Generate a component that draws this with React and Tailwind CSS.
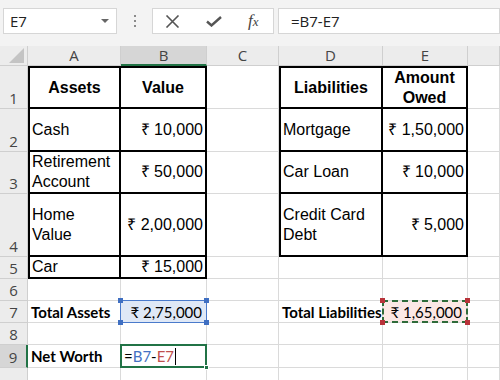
import React from "react";

const HDR = "bg-[#ececec] border-r border-b border-[#cfcfcf] flex items-center justify-center text-[15px] text-[#444] font-['Open_Sans',sans-serif]";
const ROWH = "bg-[#ececec] border-r border-b border-[#cfcfcf] flex items-end justify-center text-[15px] leading-[20px] text-[#444] font-['Open_Sans',sans-serif]";
const BASE = "border-r border-b border-[#dadada] flex items-center leading-[20px] whitespace-nowrap";
const CELL = `${BASE} px-[2px] text-[16px] font-['Liberation_Sans',Arial,sans-serif]`;
const TA = "border-l-2 border-r-2 border-b-2 border-l-black border-r-black border-b-black";
const TB = "border-r-2 border-b-2 border-r-black border-b-black";
const TOP = "border-t-2 border-t-black";
const LBL = `${BASE} pl-[3px] font-bold text-[15px] font-['Lato',sans-serif]`;
const VAL = `${BASE} relative text-[15px] font-['Lato',sans-serif]`;

function Toolbar() {
  return (
    <div className="h-[46px] bg-[#f3f3f3] flex items-start pt-[8px]">
      <div className="ml-[3px] w-[114px] h-[26px] bg-white border border-[#d6d6d6] flex items-center justify-between pl-[6px] pr-[7px]">
        <span className="text-[15px] text-[#222] font-['Open_Sans',sans-serif]">E7</span>
        <svg width="8" height="5" viewBox="0 0 8 5"><path d="M0 0 L8 0 L4 4 Z" fill="#666" /></svg>
      </div>
      <div className="w-[35px] h-[26px] flex flex-col items-center justify-center gap-[3px]">
        <div className="w-[2px] h-[2px] bg-[#8a8a8a]" />
        <div className="w-[2px] h-[2px] bg-[#8a8a8a]" />
        <div className="w-[2px] h-[2px] bg-[#8a8a8a]" />
      </div>
      <div className="w-[122px] h-[26px] bg-white border border-[#d6d6d6] flex items-center">
        <svg className="ml-[12px]" width="15" height="13" viewBox="0 0 15 13">
          <path d="M1.5 0.5 L13.5 12.5 M13.5 0.5 L1.5 12.5" stroke="#555" strokeWidth="1.6" fill="none" />
        </svg>
        <svg className="ml-[26px]" width="16" height="11" viewBox="0 0 16 11">
          <path d="M1 5.5 L5.5 9.5 L15 1" stroke="#555" strokeWidth="2.4" fill="none" />
        </svg>
        <span className="ml-[26px] italic text-[17px] leading-[20px] text-[#444] font-['Liberation_Serif',serif]">f<span className="text-[13px]">x</span></span>
      </div>
      <div className="ml-[4px] flex-1 h-[26px] bg-white border border-[#d6d6d6] flex items-center pl-[12px]">
        <span className="text-[15px] text-[#222] font-['Open_Sans',sans-serif]">=B7-E7</span>
      </div>
    </div>
  );
}

function Corner() {
  return (
    <div className="bg-[#ececec] border-r border-b border-[#cfcfcf] flex items-end justify-end pr-[3px] pb-[2px]">
      <svg width="15" height="15" viewBox="0 0 15 15"><path d="M15 0 L15 15 L0 15 Z" fill="#c4c4c4" /></svg>
    </div>
  );
}

function Handle({ pos, color }) {
  return <div className={`absolute w-[5px] h-[5px] ${pos} ${color}`} />;
}

export default function App() {
  return (
    <div className="w-[500px] h-[380px] overflow-hidden bg-white text-black">
      <Toolbar />
      <div className="grid grid-cols-[28px_93px_86px_72px_104px_85px_1fr] grid-rows-[20px_43px_43px_42px_63px_22px_22px_22px_22px_23px_40px]">
        {/* header row */}
        <Corner />
        <div className={HDR}>A</div>
        <div className="bg-[#d6d6d6] border-r border-[#cfcfcf] border-b-2 border-b-[#217346] flex items-center justify-center text-[15px] text-[#444] font-['Open_Sans',sans-serif]">B</div>
        <div className={HDR}>C</div>
        <div className={HDR}>D</div>
        <div className={HDR}>E</div>
        <div className={HDR}></div>

        {/* row 1 */}
        <div className={ROWH}>1</div>
        <div className={`${CELL} ${TA} ${TOP} justify-center font-bold`}>Assets</div>
        <div className={`${CELL} ${TB} ${TOP} justify-center font-bold`}>Value</div>
        <div className={CELL}></div>
        <div className={`${CELL} ${TA} ${TOP} justify-center font-bold`}>Liabilities</div>
        <div className={`${CELL} ${TB} ${TOP} flex-col justify-center font-bold text-center`}>
          <span>Amount</span>
          <span>Owed</span>
        </div>
        <div className={CELL}></div>

        {/* row 2 */}
        <div className={ROWH}>2</div>
        <div className={`${CELL} ${TA}`}>Cash</div>
        <div className={`${CELL} ${TB} justify-end`}>₹ 10,000</div>
        <div className={CELL}></div>
        <div className={`${CELL} ${TA}`}>Mortgage</div>
        <div className={`${CELL} ${TB} justify-end`}>₹ 1,50,000</div>
        <div className={CELL}></div>

        {/* row 3 */}
        <div className={ROWH}>3</div>
        <div className={`${CELL} ${TA} flex-col items-start justify-center`}>
          <span>Retirement</span>
          <span>Account</span>
        </div>
        <div className={`${CELL} ${TB} justify-end`}>₹ 50,000</div>
        <div className={CELL}></div>
        <div className={`${CELL} ${TA}`}>Car Loan</div>
        <div className={`${CELL} ${TB} justify-end`}>₹ 10,000</div>
        <div className={CELL}></div>

        {/* row 4 */}
        <div className={ROWH}>4</div>
        <div className={`${CELL} ${TA} flex-col items-start justify-center`}>
          <span>Home</span>
          <span>Value</span>
        </div>
        <div className={`${CELL} ${TB} justify-end`}>₹ 2,00,000</div>
        <div className={CELL}></div>
        <div className={`${CELL} ${TA} flex-col items-start justify-center`}>
          <span>Credit Card</span>
          <span>Debt</span>
        </div>
        <div className={`${CELL} ${TB} justify-end`}>₹ 5,000</div>
        <div className={CELL}></div>

        {/* row 5 */}
        <div className={ROWH}>5</div>
        <div className={`${CELL} ${TA}`}>Car</div>
        <div className={`${CELL} ${TB} justify-end`}>₹ 15,000</div>
        <div className={CELL}></div>
        <div className={CELL}></div>
        <div className={CELL}></div>
        <div className={CELL}></div>

        {/* row 6 */}
        <div className={ROWH}>6</div>
        <div className={CELL}></div>
        <div className={CELL}></div>
        <div className={CELL}></div>
        <div className={CELL}></div>
        <div className={CELL}></div>
        <div className={CELL}></div>

        {/* row 7 */}
        <div className={ROWH}>7</div>
        <div className={LBL}>Total Assets</div>
        <div className={`${VAL} justify-end bg-[#dfe8f6] pr-[4px]`}>
          <span>₹ 2,75,000</span>
          <div className="absolute -left-px -top-px -right-px -bottom-px border border-[#4a7acb]" />
          <Handle pos="-left-[3px] -top-[3px]" color="bg-[#3f6fc2]" />
          <Handle pos="-right-[3px] -top-[3px]" color="bg-[#3f6fc2]" />
          <Handle pos="-left-[3px] -bottom-[3px]" color="bg-[#3f6fc2]" />
          <Handle pos="-right-[3px] -bottom-[3px]" color="bg-[#3f6fc2]" />
        </div>
        <div className={CELL}></div>
        <div className={LBL}>Total Liabilities</div>
        <div className={`${VAL} justify-end bg-[#fbe8e5] pr-[5px]`}>
          <span>₹ 1,65,000</span>
          <div className="absolute -left-px -top-px -right-px -bottom-px border-2 border-dashed border-[#2f6b3a]" />
          <Handle pos="-left-[3px] -top-[3px]" color="bg-[#b8333a]" />
          <Handle pos="-right-[3px] -top-[3px]" color="bg-[#b8333a]" />
          <Handle pos="-left-[3px] -bottom-[3px]" color="bg-[#b8333a]" />
          <Handle pos="-right-[3px] -bottom-[3px]" color="bg-[#b8333a]" />
        </div>
        <div className={CELL}></div>

        {/* row 8 */}
        <div className={ROWH}>8</div>
        <div className={CELL}></div>
        <div className={CELL}></div>
        <div className={CELL}></div>
        <div className={CELL}></div>
        <div className={CELL}></div>
        <div className={CELL}></div>

        {/* row 9 */}
        <div className="bg-[#d6d6d6] border-b border-b-[#cfcfcf] border-r-2 border-r-[#217346] flex items-end justify-center text-[15px] leading-[20px] text-[#444] font-['Open_Sans',sans-serif]">9</div>
        <div className={LBL}>Net Worth</div>
        <div className={`${VAL} pl-[3px]`}>
          <span>=</span>
          <span className="text-[#4472c4]">B7</span>
          <span>-</span>
          <span className="text-[#c0504d]">E7</span>
          <span className="ml-[1px] w-px h-[17px] bg-black" />
          <div className="absolute -left-px -top-px -right-px -bottom-px border-2 border-[#217346]" />
          <div className="absolute -right-[3px] -bottom-[3px] w-[5px] h-[5px] bg-[#217346] border border-white" />
        </div>
        <div className={CELL}></div>
        <div className={CELL}></div>
        <div className={CELL}></div>
        <div className={CELL}></div>

        {/* row 10 */}
        <div className={ROWH}>10</div>
        <div className={CELL}></div>
        <div className={CELL}></div>
        <div className={CELL}></div>
        <div className={CELL}></div>
        <div className={CELL}></div>
        <div className={CELL}></div>
      </div>
    </div>
  );
}
